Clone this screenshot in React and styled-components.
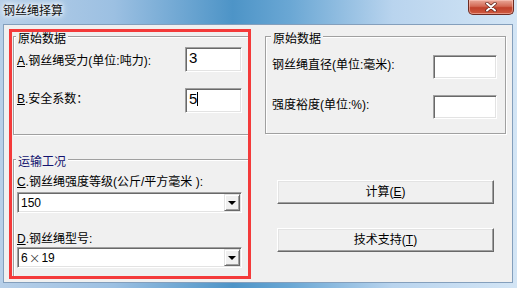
import React from "react";
import styled, { createGlobalStyle } from "styled-components";

const Global = createGlobalStyle`
  html, body { margin: 0; padding: 0; background: #fff; }
  body {
    font-family: "Liberation Sans", "Noto Sans CJK SC", sans-serif;
    font-size: 12px;
    color: #000;
  }
  u { text-decoration: underline; text-underline-offset: 1px; }
`;

const Window = styled.div`
  position: relative;
  width: 517px;
  height: 288px;
  display: flex;
  flex-direction: column;
  background: linear-gradient(
    90deg,
    #b7cfe8 0%,
    #9cc0e2 22%,
    #4d94c7 45%,
    #6aa7d4 56%,
    #b9d4ee 76%,
    #d3e5f5 100%
  );
  overflow: hidden;
`;

const TitleBar = styled.div`
  height: 24px;
  display: flex;
  justify-content: space-between;
  align-items: flex-start;
  padding-left: 3px;
`;

const TitleText = styled.div`
  line-height: 20px;
  font-family: "Noto Sans CJK SC", sans-serif;
  font-size: 12px;
  color: #111;
  text-shadow: 0 0 4px #fff, 0 0 6px #fff, 0 0 8px #e8f2fb;
`;

const CloseButton = styled.div`
  width: 46px;
  height: 15px;
  margin-right: 3px;
  box-sizing: border-box;
  border: 1px solid #6d2b22;
  border-top: none;
  border-radius: 0 0 5px 5px;
  background: linear-gradient(180deg, #e9a898 0%, #d36a55 45%, #c0412b 55%, #cf5a40 100%);
  box-shadow: inset 0 0 0 1px rgba(255, 210, 200, 0.5);
  display: flex;
  align-items: center;
  justify-content: center;
`;

const Frame = styled.div`
  flex: 1;
  padding: 0 4px 5px 3px;
`;

const Client = styled.div`
  box-sizing: border-box;
  width: 510px;
  height: 259px;
  border: 1px solid #849fbc;
  background: #f0f0f0;
  display: flex;
  align-items: flex-start;
  padding: 11px 0 0 9px;
`;

const Column = styled.div`
  display: flex;
  flex-direction: column;
  width: ${(p) => p.$width}px;
  margin-left: ${(p) => p.$offset || 0}px;
  gap: ${(p) => p.$gap || 0}px;
`;

const GroupBox = styled.div`
  position: relative;
  box-sizing: border-box;
  height: ${(p) => p.$height}px;
  border: 1px solid #a0a0a0;
  box-shadow: 1px 1px 0 #fff, inset 1px 1px 0 #fff;
  padding: ${(p) => p.$pad};
  display: flex;
  flex-direction: column;
`;

const GroupLabel = styled.span`
  position: absolute;
  top: -6px;
  left: ${(p) => p.$left}px;
  padding: 0 2px;
  line-height: 14px;
  background: #f0f0f0;
  color: ${(p) => p.$color || "#000"};
  font-family: "Noto Sans CJK SC", sans-serif;
`;

const Row = styled.div`
  display: flex;
  align-items: center;
  justify-content: space-between;
  height: ${(p) => p.$h}px;
  & + & { margin-top: ${(p) => p.$gap}px; }
`;

const Label = styled.span`
  line-height: 14px;
  white-space: nowrap;
  margin-top: ${(p) => p.$shift || 0}px;
`;

const Edit = styled.div`
  box-sizing: border-box;
  width: ${(p) => p.$w}px;
  height: 100%;
  background: #fff;
  border: 1px solid;
  border-color: #a0a0a0 #fff #fff #a0a0a0;
  box-shadow: inset 1px 1px 0 #696969, inset -1px -1px 0 #e3e3e3;
  padding: 2px 0 0 3px;
  font-size: 15px;
  line-height: 16px;
  display: flex;
  align-items: flex-start;
`;

const Caret = styled.span`
  display: inline-block;
  width: 1px;
  height: 14px;
  margin-top: 1px;
  background: #000;
`;

const FieldLabel = styled.div`
  line-height: 14px;
  white-space: nowrap;
  margin-top: ${(p) => p.$top}px;
  margin-bottom: ${(p) => p.$bottom}px;
`;

const Combo = styled.div`
  box-sizing: border-box;
  height: 21px;
  background: #fff;
  border: 1px solid;
  border-color: #a0a0a0 #fff #fff #a0a0a0;
  box-shadow: inset 1px 1px 0 #696969, inset -1px -1px 0 #e3e3e3;
  display: flex;
  align-items: center;
  justify-content: space-between;
  padding: 1px 1px 1px 3px;
`;

const ComboText = styled.span`
  font-size: 12px;
  line-height: 14px;
  display: flex;
  align-items: center;
`;

const Times = styled.span`
  font-family: "DejaVu Sans", sans-serif;
  font-size: 14px;
  font-weight: 300;
  line-height: 14px;
  margin: 0 1px;
  color: #333;
`;

const DropButton = styled.div`
  box-sizing: border-box;
  width: 16px;
  height: 17px;
  background: #f0f0f0;
  border: 1px solid;
  border-color: #e3e3e3 #696969 #696969 #e3e3e3;
  box-shadow: inset 1px 1px 0 #fff, inset -1px -1px 0 #a0a0a0;
  display: flex;
  align-items: center;
  justify-content: center;
  &::after {
    content: "";
    width: 0;
    height: 0;
    border-left: 4px solid transparent;
    border-right: 4px solid transparent;
    border-top: 4px solid #000;
    margin-top: 1px;
  }
`;

const PushButton = styled.div`
  box-sizing: border-box;
  width: 217px;
  height: 24px;
  margin-left: 12px;
  margin-top: ${(p) => p.$top}px;
  background: #f0f0f0;
  border: 1px solid;
  border-color: #fff #696969 #696969 #fff;
  box-shadow: inset -1px -1px 0 #a0a0a0, inset 1px 1px 0 #e3e3e3;
  display: flex;
  align-items: center;
  justify-content: center;
  line-height: 14px;
`;

const Highlight = styled.div`
  position: absolute;
  left: 9px;
  top: 29px;
  width: 242px;
  height: 250px;
  box-sizing: border-box;
  border: 3px solid #f43a3a;
  pointer-events: none;
`;

export default function App() {
  return (
    <>
      <Global />
      <Window>
        <TitleBar>
          <TitleText>钢丝绳择算</TitleText>
          <CloseButton>
            <svg width="12" height="10" viewBox="0 0 12 10">
              <path d="M2 1.5 L10 8.5 M10 1.5 L2 8.5" stroke="#5a2018" strokeWidth="3.4" strokeLinecap="round" />
              <path d="M2 1.5 L10 8.5 M10 1.5 L2 8.5" stroke="#fff" strokeWidth="2" strokeLinecap="round" />
            </svg>
          </CloseButton>
        </TitleBar>
        <Frame>
          <Client>
            <Column $width={237} $gap={24}>
              <GroupBox $height={99} $pad="10px 7px 0 3px">
                <GroupLabel $left={2}>原始数据</GroupLabel>
                <Row $h={25} $gap={23}>
                  <Label $shift={3}><u>A</u>.钢丝绳受力(单位:吨力):</Label>
                  <Edit $w={57}>3</Edit>
                </Row>
                <Row $h={25} $gap={23}>
                  <Label $shift={-3}><u>B</u>.安全系数：</Label>
                  <Edit $w={57}>5<Caret /></Edit>
                </Row>
              </GroupBox>
              <GroupBox $height={118} $pad="15px 7px 0 3px">
                <GroupLabel $left={2} $color="#13136e">运输工况</GroupLabel>
                <FieldLabel $top={0} $bottom={3}><u>C</u>.钢丝绳强度等级(公斤/平方毫米 ):</FieldLabel>
                <Combo>
                  <ComboText>150</ComboText>
                  <DropButton />
                </Combo>
                <FieldLabel $top={19} $bottom={1}><u>D</u>.钢丝绳型号:</FieldLabel>
                <Combo>
                  <ComboText>6<Times>×</Times>19</ComboText>
                  <DropButton />
                </Combo>
              </GroupBox>
            </Column>
            <Column $width={241} $offset={15}>
              <GroupBox $height={98} $pad="18px 8px 0 6px">
                <GroupLabel $left={5}>原始数据</GroupLabel>
                <Row $h={24} $gap={16}>
                  <Label $shift={-4}>钢丝绳直径(单位:毫米):</Label>
                  <Edit $w={64} />
                </Row>
                <Row $h={24} $gap={16}>
                  <Label $shift={-4}>强度裕度(单位:%):</Label>
                  <Edit $w={64} />
                </Row>
              </GroupBox>
              <PushButton $top={46}>计算(<u>E</u>)</PushButton>
              <PushButton $top={24}>技术支持(<u>T</u>)</PushButton>
            </Column>
          </Client>
        </Frame>
        <Highlight />
      </Window>
    </>
  );
}
